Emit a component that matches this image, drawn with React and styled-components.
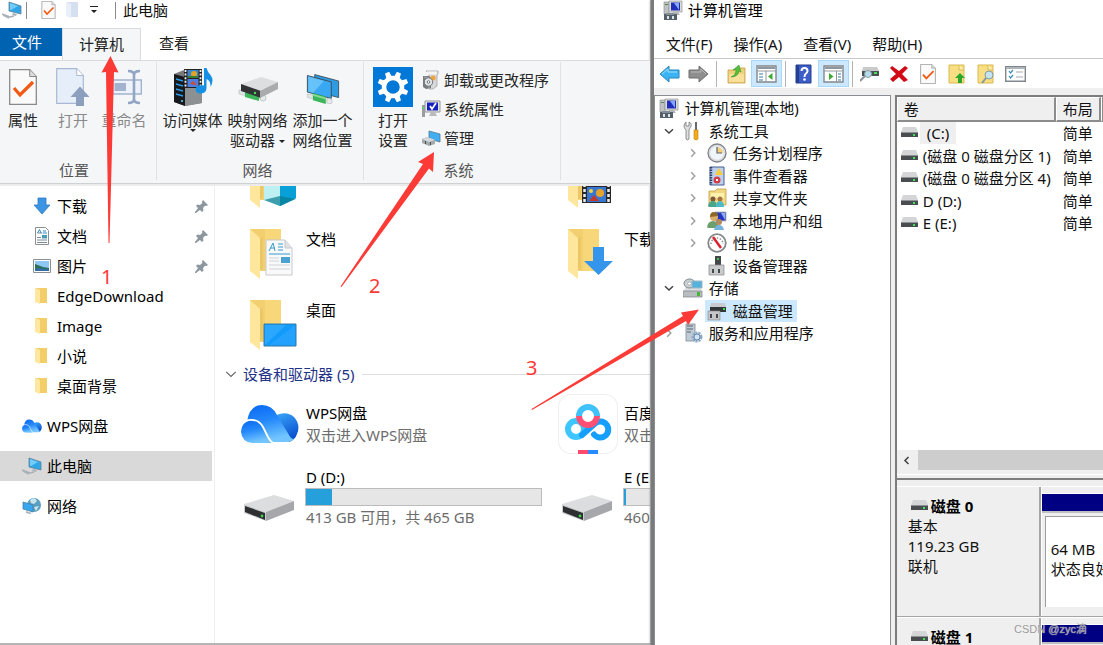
import styled, { createGlobalStyle } from 'styled-components'

const GlobalStyle = createGlobalStyle`
  * { box-sizing: border-box; }
  body {
    margin: 0;
    background: #fff;
    color: #111;
    font-family: "Noto Sans", "Noto Sans CJK SC", sans-serif;
    font-size: 15px;
    line-height: 22px;
  }
  button, table {
    font: inherit;
    color: inherit;
  }
  button {
    margin: 0;
    padding: 0;
    border: none;
    background: none;
    white-space: nowrap;
  }
  a { color: inherit; text-decoration: none; }
  ul { margin: 0; padding: 0; list-style: none; }
  p, h1, h2, h3 { margin: 0; font-size: 15px; font-weight: 400; }
  svg { display: block; flex: none; }
`

const Desktop = styled.div`
  position: relative;
  display: flex;
  height: 100vh;
  overflow: hidden;
`

/* ---------- explorer window ---------- */

const Explorer = styled.section`
  flex: 1;
  min-width: 0;
  display: flex;
  flex-direction: column;
  overflow: hidden;
  border-right: 1px solid #c4c6c8;
  border-bottom: 2px solid #b5b5b5;
`

const TitleBar = styled.header`
  display: flex;
  align-items: center;
  flex: none;
  height: 28px;
  padding: 0 2px 8px;
`

const QuickButton = styled.button`
  display: flex;
  justify-content: center;
  align-items: center;
  width: ${({ $width }) => $width || 25}px;
  height: 20px;
`

const Bar = styled.span`
  width: 1px;
  height: 17px;
  margin: 0 ${({ $gap }) => $gap || 7}px;
  background: #8b8b8b;
`

const Tabs = styled.nav`
  display: flex;
  flex: none;
  height: 32px;
`

const FileTab = styled.button`
  width: 62px;
  height: 28px;
  padding-right: 8px;
  background: #0063b1;
  color: #fff;
`

const Tab = styled.button`
  width: ${({ $active }) => ($active ? 79 : 66)}px;
  height: ${({ $active }) => ($active ? 33 : 32)}px;
  padding-bottom: 3px;
  border: 1px solid ${({ $active }) => ($active ? '#d9dbdc' : 'transparent')};
  border-bottom: none;
  background: ${({ $active }) => ($active ? '#f4f6f8' : 'transparent')};
  color: #222;
  z-index: 1;
`

const Ribbon = styled.div`
  display: flex;
  flex: none;
  height: 124px;
  background: #f4f6f8;
  border-top: 1px solid #d9dbdc;
  border-bottom: 1px solid #cfd2d5;
  box-shadow: 0 2px 0 #ececec;
  color: #262626;
  z-index: 1;
`

const Group = styled.div`
  display: flex;
  flex-direction: column;
  justify-content: space-between;
  flex: none;
  margin: 1px 0 3px;
  padding: 5px ${({ $right }) => $right}px 0 ${({ $left }) => $left}px;
  border-right: 1px solid #dfe1e3;
`

const GroupRow = styled.div`
  display: flex;
`

const GroupName = styled.p`
  line-height: 20px;
  text-align: center;
  color: #555;
`

const RibbonButton = styled.button`
  display: flex;
  flex-direction: column;
  align-items: center;
  gap: 3px;
  width: ${({ $width }) => $width}px;
  line-height: 20px;
  color: ${({ $faded }) => ($faded ? '#8a8a8a' : '#262626')};
`

const IconBox = styled.span`
  display: flex;
  justify-content: center;
  align-items: center;
  height: 40px;
`

const Caret = styled.span`
  display: inline-block;
  vertical-align: middle;
  margin-left: ${({ $inline }) => ($inline ? 4 : 0)}px;
  margin-top: ${({ $inline }) => ($inline ? 0 : -4)}px;
  border: 3px solid transparent;
  border-top-color: #222;
  border-bottom: none;
`

const ToolList = styled.div`
  display: flex;
  flex-direction: column;
  padding-left: 4px;
`

const ToolButton = styled.button`
  display: flex;
  align-items: center;
  gap: 3px;
  height: 29px;
  padding-bottom: 3px;
`

const Body = styled.div`
  display: flex;
  flex: 1;
  min-height: 0;
  overflow: hidden;
`

const NavPane = styled.nav`
  flex: none;
  width: 215px;
  padding: 7px 2px 0 0;
  border-right: 1px solid #efefef;
`

const NavLink = styled.a`
  display: flex;
  align-items: center;
  gap: 5px;
  height: 30px;
  margin-top: ${({ $top }) => ($top ? 10 : 0)}px;
  padding: 0 4px 0 ${({ $top }) => ($top ? 22 : 32)}px;
  background: ${({ $active }) => ($active ? '#d9d9d9' : 'transparent')};
  color: #000;

  .pin {
    margin-left: auto;
  }
`

const Files = styled.main`
  flex: 1;
  min-width: 0;
  padding-left: 26px;
  overflow: hidden;
  color: #000;
`

const Tiles = styled.div`
  display: grid;
  grid-template-columns: 301px 301px;
  gap: 11px 17px;
  /* the list is scrolled a little, so its first row is cut off */
  margin-top: ${({ $scrolled }) => ($scrolled ? -27 : 8)}px;
`

const Tile = styled.a`
  display: flex;
  align-items: ${({ $align }) => $align || 'center'};
  gap: 6px;
  height: ${({ $drive }) => ($drive ? 63 : 60)}px;
  white-space: nowrap;
`

const TileIcon = styled.span`
  display: flex;
  justify-content: ${({ $end }) => ($end ? 'flex-end' : 'center')};
  align-items: center;
  flex: none;
  width: 58px;
`

const TileText = styled.span`
  display: flex;
  flex-direction: column;
  flex: 1;
`

const TileLine = styled.span`
  padding-left: 1px;
  color: ${({ $muted }) => ($muted ? '#6d6d6d' : 'inherit')};
`

const Usage = styled.span`
  display: block;
  height: 18px;
  border: 1px solid #bcbcbc;
  background: #e6e6e6;
`

const UsageFill = styled.span`
  display: block;
  height: 100%;
  background: #26a0da;
`

const Section = styled.h2`
  display: flex;
  align-items: center;
  gap: 6px;
  height: 24px;
  margin: 3px 0 0 -16px;
  color: #1e3287;
  white-space: nowrap;

  &::after {
    content: "";
    flex: 1;
    height: 1px;
    margin-left: 2px;
    background: #dedede;
  }
`

/* ---------- computer management window ---------- */

const Manager = styled.section`
  display: flex;
  flex-direction: column;
  flex: none;
  width: 41%;
  border-left: 3px solid #7a7a7a;
  background: #efefef;
  box-shadow: -1px 0 2px #0000004d;
  overflow: hidden;
`

const ManagerTitle = styled.header`
  display: flex;
  align-items: center;
  gap: 5px;
  flex: none;
  height: 22px;
  padding: 0 0 2px 9px;
  background: #fff;
  color: #000;
`

const MenuBar = styled.nav`
  display: flex;
  align-items: center;
  gap: 21px;
  flex: none;
  height: 37px;
  padding: 7px 0 0 12px;
  background: #fff;
  border-bottom: 1px solid #c8c8c8;
`

const ToolBar = styled.div`
  display: flex;
  align-items: center;
  flex: none;
  height: 29px;
  padding-left: 1px;
  background: #fff;
`

const IconButton = styled.button`
  display: flex;
  justify-content: center;
  align-items: center;
  width: ${({ $on }) => ($on ? 31 : 29)}px;
  height: 27px;
  background: ${({ $on }) => ($on ? '#cce8ff' : 'transparent')};
  box-shadow: ${({ $on }) => ($on ? 'inset 0 0 0 1px #a8d8fa' : 'none')};
`

const Divider = styled.span`
  width: 1px;
  height: 26px;
  margin: 0 ${({ $wide }) => ($wide ? 5 : 3)}px 0 3px;
  background: #b4b4b4;
`

const Panes = styled.div`
  display: flex;
  gap: 4px;
  flex: 1;
  min-height: 0;
  padding-top: 7px;
`

const TreePane = styled.div`
  flex: none;
  width: 237px;
  padding: 1px 0 0 2px;
  background: #fff;
  border: 1px solid #8a8d94;
  border-bottom: none;
`

const TreeRow = styled.li`
  display: flex;
  align-items: center;
  height: 22px;
  padding-left: ${({ $depth }) => ($depth > 1 ? 24 : 0)}px;
  white-space: nowrap;

  &:nth-child(even) {
    height: 23px;
  }
`

const Twisty = styled.span`
  display: flex;
  justify-content: center;
  width: 24px;
`

const TreeItem = styled.a`
  display: flex;
  align-items: center;
  gap: 6px;
  height: 22px;
  padding: 0 4px 0 2px;
  background: ${({ $selected }) => ($selected ? '#cce8ff' : 'transparent')};
`

const DiskPane = styled.div`
  display: flex;
  flex-direction: column;
  flex: 1;
  min-width: 0;
  border-left: 2px solid #7d7d7d;
  border-top: 2px solid #7d7d7d;
  overflow: hidden;
`

const VolumeArea = styled.div`
  height: 353px;
  flex: none;
  background: #fff;
`

const Volumes = styled.table`
  width: 100%;
  table-layout: fixed;
  border-collapse: separate;
  border-spacing: 0;
  white-space: nowrap;

  th {
    height: 25px;
    padding: 0 0 0 6px;
    background: #efefef;
    border: 1px solid #fff;
    border-right: 2px solid #8c8c8c;
    border-bottom: 2px solid #8c8c8c;
    font-weight: 400;
    line-height: 20px;
    text-align: left;
  }
  td {
    height: 22px;
    padding: 0 0 0 7px;
  }
  tbody tr:nth-child(even) td {
    height: 23px;
  }
`

const VolumeName = styled.span`
  display: flex;
  align-items: center;
  gap: 2px;
  margin-left: -3px;
`

const NameText = styled.span`
  padding: 0 ${({ $selected }) => ($selected ? 7 : 3)}px;
  background: ${({ $selected }) => ($selected ? '#efefef' : 'transparent')};
`

const ScrollBar = styled.div`
  display: flex;
  flex: none;
  height: 20px;
  background: #cdcdcd;
`

const ScrollArrow = styled.button`
  display: flex;
  justify-content: center;
  align-items: center;
  width: 21px;
  padding-right: 2px;
  background: #efefef;
`

const Splitter = styled.div`
  flex: none;
  height: 6px;
  margin: 4px 0 6px;
  border-top: 1px solid #fff;
  border-bottom: 2px solid #7d7d7d;
`

const DiskRow = styled.div`
  display: flex;
  flex: none;
  height: 131px;
  border-top: 1px solid #fff;
  border-bottom: 1px solid #a5a5a5;
`

const DiskInfo = styled.div`
  flex: none;
  width: 144px;
  padding: 9px 0 0 11px;
  border-right: 2px solid #a5a5a5;
  line-height: 20px;

  h3 {
    display: flex;
    align-items: center;
    gap: 3px;
    padding-left: 3px;
    font-weight: 700;
    line-height: 20px;
    color: #000;
  }
`

const Partitions = styled.div`
  flex: 1;
  min-width: 0;
  padding-left: 2px;
  border-left: 1px solid #fff;
`

const PartitionBar = styled.div`
  height: 20px;
  margin: 6px 0 0 -2px;
  background: #000082;
  border-top: 1px solid #fff;
  border-bottom: 2px solid #c0c0c0;
`

const Partition = styled.div`
  height: 91px;
  margin: 3px 0 0 1px;
  padding: 22px 0 0 5px;
  background: #fff;
  border-left: 1px solid #9c9c9c;
  border-top: 1px solid #9c9c9c;
  line-height: 20px;
  white-space: nowrap;
`

/* ---------- notes drawn over both windows ---------- */

const Arrows = styled.svg`
  position: absolute;
  left: 0;
  top: 0;
  pointer-events: none;
  z-index: 3;
`

const Step = styled.span`
  position: absolute;
  left: ${({ $x }) => $x}px;
  top: ${({ $y }) => $y}px;
  font-size: 20px;
  line-height: 16px;
  color: #fc3a36;
  z-index: 3;
`

const Watermark = styled.span`
  position: absolute;
  right: 16px;
  bottom: 6px;
  font-family: "Liberation Sans", "Noto Sans CJK SC", sans-serif;
  font-size: 11px;
  line-height: 20px;
  color: #999;
  text-shadow: 0 0 1px #fff;
`

/* ---------- icons ---------- */

const Chevron = ({ open, color = '#8a8a8a', size = 10 }) => (
  <svg width={size} height={size} viewBox="0 0 10 10" fill="none" stroke={color} strokeWidth={size > 10 ? 1 : 1.5}>
    <path d={open ? 'M1 3.2 5 7 9 3.2' : 'M3.2 1.2 6.8 5 3.2 8.8'} />
  </svg>
)

const DocCheck = ({ width = 28, height = 36 }) => (
  <svg width={width} height={height} viewBox="0 0 28 36">
    <path d="M.7.7h20L27.3 7.5v27.8H.7z" fill="#fafafa" stroke="#8a8a8a" strokeWidth="1.3" />
    <path d="M20.7.7v6.8h6.6" fill="#ddd" stroke="#8a8a8a" />
    <path d="m5 19 6 7L24 13" fill="none" stroke="#f25a13" strokeWidth="3.2" />
  </svg>
)

const OpenDoc = () => (
  <svg width="34" height="38" viewBox="0 0 34 38">
    <path d="M.7.7h20L27.3 7.5v27.8H.7z" fill="#e6eefa" stroke="#a9b8d2" strokeWidth="1.2" />
    <path d="M20.7.7v6.8h6.6" fill="#fff" stroke="#a9b8d2" />
    <path d="M24 18.5 33.5 29H28v9h-8v-9h-5.5z" fill="#8c9fbe" />
  </svg>
)

const Rename = () => (
  <svg width="36" height="36" viewBox="-6 0 36 36">
    <path d="M.7 11h28.6v14H.7z" fill="#eef3fb" stroke="#a3b2ce" strokeWidth="1.4" />
    <path d="M2.5 14H14v8H2.500z" fill="#a3b2ce" />
    <path d="M16 2q6 0 6 4v24q0 4-6 4M28 2q-6 0-6 4m0 24q0 4 6 4" fill="none" stroke="#93a5c4" strokeWidth="2.6" />
  </svg>
)

const Media = () => (
  <svg width="40" height="40" viewBox="0 0 40 40">
    <path d="m1 7 10-4 18 3v30L12 39 1 35z" fill="#77797c" />
    <path d="m1 7 11 3v29L1 35z" fill="#17191c" />
    <path d="m12 10 17-3v29l-17 3z" fill="#8d9093" />
    <path d="m3 12 7 2m-7 3 7 2m-7 3 7 2m-7 3 7 2" stroke="#2b9bea" strokeWidth="1.6" />
    <circle cx="9" cy="34" r="1" fill="#55e0ff" />
    <path d="M11 2h18v19H11z" fill="#232323" />
    <path d="M14.5 3h11v8h-11z" fill="#3c86c8" /><path d="M14.5 12h11v8h-11z" fill="#4c7fe0" />
    <circle cx="21" cy="7" r="3" fill="#e3a224" /><path d="M15 9h10v2H15z" fill="#3c7c31" />
    <path d="m17 17 3-3 4 4z" fill="#d9472c" />
    <path d="M12.5 3v18m15-18v18" stroke="#f2f2f2" strokeWidth="1.8" strokeDasharray="2 1.6" />
    <path d="M31 1h2.500q1 4 4 7 4 5 0 12 .5-6-4-8v9q0 5-5.500 5.500-5.500 0-5.500-4 1-5 8.500-4z" fill="#1590e4" />
  </svg>
)

const NetTube = ({ x = 0, y = 0 }) => (
  <g transform={`translate(${x} ${y})`}>
    <path d="m1 3 26 6v4L1 7z" fill="#dfe5e4" stroke="#b3bbb9" strokeWidth=".6" />
    <path d="m7 2 14 4v8L7 10z" fill="#3db55b" /><path d="m7 3 14 4v2L7 5z" fill="#86dd97" />
    <circle cx="25" cy="11" r="3" fill="#e6ebea" stroke="#aab2b0" strokeWidth=".6" />
  </g>
)

const NetDrive = () => (
  <svg width="40" height="32" viewBox="0 -4 40 32">
    <NetTube x={0} y={12} />
    <path d="m3 9 20-7 17 5-17 9z" fill="#dcdee0" />
    <path d="m3 9 20 7v7L3 16z" fill="#303234" /><path d="m22 16 18-9v7l-18 9z" fill="#a9abad" />
    <circle cx="17" cy="18" r="1.2" fill="#3fe052" />
  </svg>
)

const NetPlace = () => (
  <svg width="36" height="34" viewBox="0 -3 36 37">
    <path d="m9 2 26 7v18L9 20z" fill="#2f9be0" stroke="#44525e" />
    <path d="m1 3 26 7v18L1 21z" fill="#38a8f2" stroke="#3b4a57" />
    <path d="m2 4 17 5-12 13-5-2z" fill="#67c1fa" />
    <NetTube x={0} y={20} />
  </svg>
)

const Gear = () => (
  <svg width="40" height="40" viewBox="0 0 40 40">
    <path d="M0 0h40v40H0z" fill="#0078d7" />
    <g fill="#fff">
      {[0, 45, 90, 135, 180, 225, 270, 315].map((a) => (
        <path key={a} d="M17 11 17.800 4.500h4.400L23 11z" transform={`rotate(${a + 22.5} 20 20)`} />
      ))}
    </g>
    <circle cx="20" cy="20" r="9" fill="none" stroke="#fff" strokeWidth="4.5" />
  </svg>
)

const Uninstall = () => (
  <svg width="19" height="20" viewBox="0 0 19 20">
    <path d="M4 1h12v3h-1v12l-4 3H7V4z" fill="#d6d8da" stroke="#a4a4a4" strokeWidth=".8" />
    <path d="M5 1.500h10v3H5z" fill="#f4f4f4" /><circle cx="11" cy="8" r="2.500" fill="#f0a53b" />
    <path d="M1 6h6l2 2v10l-5 1-3-2z" fill="#777c80" /><path d="m2 7 5 1v10" fill="none" stroke="#a9adb0" />
    <circle cx="6.500" cy="12" r="4.200" fill="#dfe5e8" stroke="#777" />
    <circle cx="6.500" cy="12" r="1.300" fill="#fff" stroke="#777" />
  </svg>
)

const SystemIcon = () => (
  <svg width="19" height="18" viewBox="0 0 19 18">
    <path d="M0 5h3v12H0z" fill="#9a9d9f" /><path d="M1 7h1v2H1z" fill="#3bea4c" />
    <path d="M3 1h15v11H3z" fill="#e7e7e4" stroke="#97979b" /><path d="M5 2.500h11v8H5z" fill="#1420c0" />
    <path d="m8 6 2 3 4-6" fill="none" stroke="#fff" strokeWidth="1.800" />
    <path d="M9 12h4l2 4H7z" fill="#b8babb" />
  </svg>
)

const ManageIcon = () => (
  <svg width="19" height="17" viewBox="0 0 19 17">
    <path d="m7 1 11 3v8L7 9z" fill="#42aef0" stroke="#527a95" strokeWidth=".8" />
    <path d="m0 9 5-2 8 3v4l-6 2-7-3z" fill="#a4a9ad" /><path d="m0 9 5-2 8 3-6 2z" fill="#d5d9dc" />
    <path d="M3 11h1v3H3zm5 1h1v3H8z" fill="#4b4f53" />
  </svg>
)

const Computer = () => (
  <svg width="20" height="18" viewBox="0 0 20 18">
    <path d="m7 1 12 4v8L7 10z" fill="#32a5e7" stroke="#5e8199" strokeWidth=".8" />
    <path d="m8 2 8 3-7 4H8z" fill="#73cdfb" /><path d="m11 12 4 1-1 2-4-1z" fill="#a9b3ba" />
    <path d="m0 13 8 3 4-1M1 14l6 3" fill="none" stroke="#aab1b6" strokeWidth="1.400" />
  </svg>
)

const SmallFolder = ({ faded }) => (
  <svg width="20" height="18" viewBox="0 0 20 18">
    <path d="M4 1h11v15H6z" fill={faded ? '#d4e0f0' : '#f3ce68'} />
    <path d="m3 1 5 2v14l-5-2z" fill={faded ? '#e8eff8' : '#ffe7a0'} />
  </svg>
)

const DownArrow = () => (
  <svg width="20" height="18" viewBox="0 0 20 18">
    <path d="M6 1h8v7h4l-8 9-8-9h4z" fill="#3b95e3" stroke="#2c7ac2" strokeWidth=".8" />
  </svg>
)

const DocSmall = () => (
  <svg width="20" height="18" viewBox="0 0 20 18">
    <path d="M3.500.5h10l3 3v14h-13z" fill="#fff" stroke="#8a8f94" />
    <path d="M5.500 6h5M5 13h10M5 15.500h10M5 10.500h4" stroke="#7e8b96" />
    <path d="m5.500 6 2-3.500 1.500 3.500M11 4h3M11 6h4" fill="none" stroke="#2d8cc8" /><path d="M10 8h5v3.500h-5z" fill="#4b9bb8" />
  </svg>
)

const Photo = () => (
  <svg width="20" height="18" viewBox="0 0 20 18">
    <path d="M1.500 2.500h17v13h-17z" fill="#fff" stroke="#8a8f94" />
    <path d="M3 4h14v10H3z" fill="#8fc8f4" /><path d="m3 7 8 3 6 1v3H3z" fill="#2f7155" /><path d="m3 11 14 1v2H3z" fill="#336da3" />
  </svg>
)

const Pin = () => (
  <svg className="pin" width="13" height="13" viewBox="0 0 13 13" fill="#8c979f">
    <path d="m8 0 5 5-1.500 1-1.500-.3L8 8l.5 2.500L7 12 1 6l1.500-1.500L5 5l2.300-2L7 1.500z" />
    <path d="M3.500 7.500 5.500 9.500 1 13H0v-1z" />
  </svg>
)

const WpsCloud = ({ width = 58, height = 40, id }) => (
  <svg width={width} height={height} viewBox="0 0 58 40">
    <defs>
      <linearGradient id={`${id}a`} x1="0" y1="0" x2="0.300" y2="1">
        <stop offset="0" stopColor="#0866f2" /><stop offset=".5" stopColor="#2489fb" /><stop offset="1" stopColor="#72c5ff" />
      </linearGradient>
      <linearGradient id={`${id}b`} x1="0" y1="0" x2="0.400" y2="1">
        <stop offset="0" stopColor="#3ba9fb" /><stop offset="1" stopColor="#0a50cf" />
      </linearGradient>
    </defs>
    <path d="M33 12q12-6 20 1 7 8 3 17-2 6-8 8z" fill={`url(#${id}b)`} />
    <path d="M6 18Q8 1 21 1q10 0 15 10l12 20q2 4 5 4-3 3-8 3H12z" fill={`url(#${id}a)`} />
    <path d="M0 28q1-12 12-12 7 0 11 8l8 15H11Q1 38 0 28z" fill={`url(#${id}a)`} />
    <path d="M1 20q5-5 11-4 6 0 10 7l5 10q2 4 5 6" fill="none" stroke="#fff" strokeWidth="1.800" />
  </svg>
)

const Globe = () => (
  <svg width="20" height="18" viewBox="0 0 20 18">
    <circle cx="12" cy="8" r="7" fill="#5b9fc0" /><path d="M8 3q5-4 7 1l-3 3-3-1zm4 7 5-1-3 5z" fill="#c8e5ee" />
    <path d="m1 5 10 3v7L1 12z" fill="#36a6ee" stroke="#4f7f9f" strokeWidth=".8" /><path d="m4 14 6 2-2 1-4-1z" fill="#a9b5bb" />
  </svg>
)

const extras = {
  cube: <g><path d="m15 22 16-9 16 6v22l-16 8-16-7z" fill="#19b9d3" /><path d="m15 20 16 5v24l-16-6z" fill="#bdf0f2" /><path d="m31 25 16-6v22l-16 8z" fill="#09a0d8" /><path d="m31 39 16 3-16 7-16-6z" fill="#087b91" opacity=".7" /></g>,
  film: <g><path d="M15 12h29v34H15z" fill="#2a2a2a" /><path d="M20 13h19v15H20z" fill="#377945" /><path d="M20 30h19v15H20z" fill="#3776d1" /><circle cx="26" cy="23" r="4" fill="#bf3e69" /><circle cx="33" cy="36" r="4" fill="#e7a42a" /><circle cx="24" cy="34" r="2" fill="#f6d53c" /><path d="m22 44 5-6 5 6z" fill="#c4382c" /><path d="M17.500 12v34m24-34v34" stroke="#eee" strokeWidth="2.500" strokeDasharray="3 2" /></g>,
  doc: <g><path d="M17 12h19l7 8v27H17z" fill="#f9f9fa" stroke="#c7c9cc" /><path d="M36 12v8h7" fill="#dfe2e5" stroke="#c7c9cc" /><path d="m20 23 4-8 2 8m-5-3h5m3-4h5m-5 3h5m-5 3h5M20 26h21" fill="none" stroke="#379acd" /><path d="M32 29h9v6h-9z" fill="#4ba1d1" /><path d="M20 30h10m-10 3h10m-10 4h21m-21 4h21" stroke="#d0d3d6" /></g>,
  down: <path d="M26 19h11v14h9L31.500 47 17 33h9z" fill="#3495ea" />,
  desk: <g><path d="M15 25h32v22H15z" fill="#119bfa" stroke="#347aa8" /><path d="M16 26h21L16 46z" fill="#36adff" opacity=".7" /><path d="m20 46 26-20v20z" fill="#35a8ff" opacity=".5" /></g>,
}

const Folder = ({ extra }) => (
  <svg width="50" height="52" viewBox="0 0 50 52">
    <path d="M1 1h31v42H12L1 35z" fill="#f2d06f" /><path d="M16 1h16v42H16z" fill="#ffe08a" opacity=".45" />
    <path d="m1 1 10 9v41L1 43z" fill="#ffe69d" /><path d="m11 10 3-1v31l-3 3z" fill="#e5bd5b" opacity=".5" />
    {extras[extra]}
  </svg>
)

const Drive = () => (
  <svg width="53" height="34" viewBox="1 0 53 34">
    <path d="M1 10 31 1l20 6-28 11z" fill="#dcdddf" />
    <path d="m1 10 22 8v9L1 19z" fill="#cbcccf" /><path d="m2 12 20 7v7L2 18z" fill="#2d2f31" />
    <path d="M23 18 51 7v9L23 27z" fill="#a5a7aa" /><circle cx="19" cy="22" r="1.400" fill="#35d54b" />
  </svg>
)

const Baidu = () => (
  <svg width="60" height="60" viewBox="0 0 60 60">
    <rect x=".5" y=".5" width="59" height="59" rx="12" fill="#fff" stroke="#eee" />
    <g fill="none" strokeWidth="6">
      <circle cx="18" cy="35" r="8" stroke="#3dc6ff" />
      <path d="M24 41 37 29.500a8 8 0 1 1-1 11" stroke="#149fff" strokeLinecap="round" />
      <path d="M21 22a9 9 0 0 1 18 0" stroke="#3fc2fb" />
      <path d="M21 22a9 9 0 0 0 18 0" stroke="#ff4f75" />
    </g>
    <path d="M20 56h10v4H20z" fill="#ff4a6d" /><path d="M30 56h10v4H30z" fill="#258bff" />
  </svg>
)

const MgmtIcon = () => (
  <svg width="20" height="20" viewBox="0 0 20 20">
    <path d="M1 2h5v12H1z" fill="#c0c3c5" stroke="#85888a" strokeWidth=".6" /><path d="M2 4h3v1H2z" fill="#4b8c4c" />
    <path d="M6 1h13v11H6z" fill="#dcdcd3" stroke="#919496" strokeWidth=".7" /><path d="M8 2.500h9v8H8z" fill="#202cba" />
    <path d="m11 3 5-.5V10z" fill="#87a7ff" /><path d="M10 12h5l2 3h-7z" fill="#b4b7b8" />
    <path d="M1 14h13v6H1z" fill="#53606a" /><path d="M3 13h8v2H3z" fill="#818e96" /><path d="M4 16h2v3H4zm5 0h2v3H9z" fill="#dee3e6" />
  </svg>
)

const Arrow = ({ back }) => (
  <svg width="21" height="18" viewBox="0 0 21 18">
    <path
      d={back ? 'M10 1v4h10v8H10v4L1 9z' : 'M11 1v4H1v8h10v4l9-8z'}
      fill={back ? '#3bb4f3' : '#8e8e8e'} stroke={back ? '#2d82b7' : '#6e6e6e'}
    />
    <path d={back ? 'm3 9 6-5v3h9' : 'M3 7h10V4l5 5'} fill="none" stroke={back ? '#9be0ff' : '#b8b8b8'} />
  </svg>
)

const FolderUp = () => (
  <svg width="19" height="20" viewBox="0 0 19 20">
    <path d="M1 6h6l2-2h9v15H1z" fill="#eed17b" stroke="#c59d43" strokeWidth=".8" /><path d="M2 10h15v8H2z" fill="#f8e09a" />
    <path d="M4 13q5-2 5-7L6 6l6-5 2 7-2-1q-1 6-8 6z" fill="#55bf3d" stroke="#318d27" strokeWidth=".5" />
  </svg>
)

/* tree: the list column is on the left, otherwise on the right */
const Layout = ({ tree }) => (
  <svg width="21" height="18" viewBox="0 0 21 18">
    <path d="M1 1h19v16H1z" fill="#fff" stroke="#83888d" strokeWidth="1.400" /><path d="M2 2h17v2H2z" fill="#8e969e" />
    <path d={tree ? 'M1 6h19M10 6v11' : 'M1 6h19M13.500 6v11'} stroke="#92979b" />
    {tree
      ? <g><path d="M3 9h4m-4 3h4m-4 3h4" stroke="#3978a4" strokeWidth="1.200" /><path d="M16.500 8v7L12 11.500z" fill="#3caa35" /></g>
      : <g><path d="M15 9h3m-3 3h3m-3 3h3" stroke="#3978a4" strokeWidth="1.200" /><path d="M6 8v7l4.500-3.500z" fill="#3caa35" /></g>}
  </svg>
)

const Help = () => (
  <svg width="17" height="20" viewBox="0 0 17 20">
    <path d="M1 1h15v18H1z" fill="#3c5dc8" stroke="#263f91" /><path d="M1 1h3v18H1z" fill="#24418f" />
    <path d="M6.500 7q0-3 3-3t3 3q0 1.500-1.500 2.500T9.500 13" fill="none" stroke="#fff" strokeWidth="2" /><circle cx="9.500" cy="15.500" r="1.300" fill="#fff" />
  </svg>
)

const MiniDrive = () => (
  <svg width="17" height="12" viewBox="0 0 17 12">
    <path d="M2 0h13l2 5H0z" fill="#d4d5d7" /><path d="M0 5h17v5H0z" fill="#4a4d50" /><path d="M0 5h17v1H0z" fill="#8f9294" /><path d="M12 7h2v2h-2z" fill="#39e95b" />
  </svg>
)

const DriveSearch = () => (
  <svg width="20" height="17" viewBox="0 0 20 17">
    <path d="M3 2h14l2 4H2z" fill="#c8cacc" /><path d="M2 6h17v5H2z" fill="#4b5053" /><path d="M14 7h3v2h-3z" fill="#45df5b" />
    <circle cx="8" cy="9" r="3.500" fill="#b6ddeb" stroke="#899da7" /><path d="m5 11-5 5" stroke="#8a9399" strokeWidth="2" />
  </svg>
)

const Cross = () => (
  <svg width="20" height="18" viewBox="0 0 20 18">
    <path d="m3 1 7 5 6-5 3 2-6 6 6 6-4 2-5-5-6 5-3-3 6-5-6-6z" fill="#d10b16" />
  </svg>
)

const Note = ({ search }) => (
  <svg width="18" height="20" viewBox="0 0 18 20">
    <path d="M1 1h15v18H1z" fill="#f9df83" stroke="#d9b84f" /><path d="M11 1v5h5" fill="#fff0b8" stroke="#d9b84f" />
    {search
      ? <g><circle cx="12" cy="11" r="4" fill="#c3e4f0" stroke="#879ba5" /><path d="m9 14-4 5" stroke="#8496a2" strokeWidth="2" /></g>
      : <path d="m12 9 5 5h-3v5h-4v-5H7z" fill="#29a82d" />}
  </svg>
)

const Checklist = () => (
  <svg width="21" height="16" viewBox="0 0 21 16">
    <path d="M.7.7h19.600v14.600H.7z" fill="#fff" stroke="#80878c" strokeWidth="1.400" /><path d="M1 1h19v2H1z" fill="#aeb6bb" />
    <path d="m4 5 1.500 2L8 4M4 10l1.500 2L8 9" fill="none" stroke="#3a8abd" strokeWidth="1.200" /><path d="M11 6h7m-7 5h7" stroke="#a5a7a9" strokeWidth="1.200" />
  </svg>
)

const treeArt = {
  tools: <g><path d="M3 1v4h3V1q4 2 1 6l-1 2v9q-2 2-3 0V9Q-1 5 3 1z" fill="#dde0e2" stroke="#777" strokeWidth=".8" /><path d="M12 1h2v9h-2z" fill="#656b70" /><path d="M11 9h4v9q-2 2-4 0z" fill="#f3ab20" stroke="#c77f0b" strokeWidth=".6" /></g>,
  clock: <g><circle cx="10" cy="10" r="9" fill="#d8dadd" stroke="#818387" strokeWidth="1.300" /><circle cx="10" cy="10" r="6.800" fill="#eff5f9" /><path d="M10 10V4a6 6 0 0 1 6 6z" fill="#f5cf76" /><path d="M10 4v6h5" fill="none" stroke="#586777" strokeWidth="1.200" /></g>,
  events: <g><path d="M3 1h14v18H3z" fill="#bfd0eb" stroke="#455f93" /><path d="M4 1v18" stroke="#30466e" strokeWidth="2.500" strokeDasharray="1.500 1" /><path d="m12 2 4 7H8z" fill="#f8cc37" /><circle cx="10" cy="14" r="3.500" fill="#d23c48" /><path d="m9 13 2 2m0-2-2 2" stroke="#fff" /></g>,
  share: <g><path d="M2 3h6l2-2h9v16H2z" fill="#f1d781" stroke="#c49f45" strokeWidth=".8" /><path d="M4 5h13v5H4z" fill="#fff1ae" /><circle cx="6" cy="11" r="2.500" fill="#7e583c" /><circle cx="13" cy="11" r="2.500" fill="#a87244" /><path d="M1 18q1-5 5-5t4 6H2z" fill="#47a68b" /><path d="M9 19q0-6 4-6t4 6z" fill="#4dbac7" /></g>,
  users: <g><path d="M8 1h11v9H8z" fill="#2536bc" stroke="#b6b8bb" /><path d="m14 2 4 7V2z" fill="#8caefa" /><circle cx="7" cy="6" r="4" fill="#dcae6c" /><path d="M3 6q0-5 4-5t4 4z" fill="#8c6927" /><path d="M0 16q1-6 6-6t6 7H1z" fill="#6d9f6e" /><circle cx="12" cy="11" r="3" fill="#b68a61" /><path d="M7 19q1-5 5-5t5 5z" fill="#76b2df" /></g>,
  gauge: <g><circle cx="10" cy="10" r="8.800" fill="#fff" stroke="#85878a" strokeWidth="1.800" /><path d="M4 11a6 6 0 0 1 12 0" fill="none" stroke="#8b9095" strokeDasharray="1.500 1.500" strokeWidth="1.500" /><path d="m6 4 8 11" stroke="#db2330" strokeWidth="2.500" /></g>,
  device: <g><path d="M8 0h6v10H8z" fill="#44484b" /><path d="M10 2h2v2h-2z" fill="#37c54d" /><path d="M2 9h15v10H2z" fill="#c8cacc" stroke="#888" strokeWidth=".7" /><path d="M5 13h2v4H5zm6 0h2v4h-2z" fill="#43484b" /></g>,
  storage: <g><path d="m3 9 14 0 2 5H0z" fill="#dadde0" /><path d="M0 13h19v6H0z" fill="#b8bdc0" stroke="#7b8084" strokeWidth=".7" /><path d="M14 14h3v4h-3z" fill="#49b638" /><ellipse cx="6.500" cy="5.500" rx="5.500" ry="4.500" fill="#c7d0d5" stroke="#7f888d" /><ellipse cx="6.500" cy="5.500" rx="2" ry="1.500" fill="#fff" stroke="#90999e" strokeWidth=".6" /><path d="M9 3h10v7H9z" fill="#54b3de" stroke="#a1b5c0" /></g>,
  disk: <g><path d="M4 2h14l1 4H3z" fill="#c9cbce" /><path d="M3 6h16v5H3z" fill="#34373a" /><path d="M16 7h2v2h-2z" fill="#3ade55" /><path d="M1 10h12v9H1z" fill="#c5c7c9" stroke="#888" strokeWidth=".6" /><path d="M3 13h2v4H3zm6 0h2v4H9z" fill="#43484b" /></g>,
  services: <g><path d="M3 1h9v17H3z" fill="#c0cbd4" stroke="#7f8c97" strokeWidth=".8" /><path d="M4 3h6m-6 3h6m-6 3h4" stroke="#57656e" /><circle cx="14" cy="14" r="4" fill="none" stroke="#8cabcc" strokeWidth="3" strokeDasharray="2 .8" /><circle cx="14" cy="14" r="3" fill="#d6e4f2" stroke="#6587ac" /></g>,
}

const TreeIcon = ({ name }) => (
  <svg width="20" height="20" viewBox="0 0 20 20">{treeArt[name]}</svg>
)

/* ---------- data ---------- */

const navLinks = [
  { name: '下载', icon: <DownArrow />, pinned: true },
  { name: '文档', icon: <DocSmall />, pinned: true },
  { name: '图片', icon: <Photo />, pinned: true },
  { name: 'EdgeDownload', icon: <SmallFolder /> },
  { name: 'Image', icon: <SmallFolder /> },
  { name: '小说', icon: <SmallFolder /> },
  { name: '桌面背景', icon: <SmallFolder /> },
  { name: 'WPS网盘', icon: <WpsCloud width={20} height={14} id="nav" />, top: true },
  { name: '此电脑', icon: <Computer />, top: true, active: true },
  { name: '网络', icon: <Globe />, top: true },
]

const folders = [
  { extra: 'cube' },
  { extra: 'film' },
  { extra: 'doc', name: '文档' },
  { extra: 'down', name: '下载' },
  { extra: 'desk', name: '桌面' },
]

const drives = [
  { name: 'D (D:)', used: 11, note: '413 GB 可用，共 465 GB' },
  { name: 'E (E:)', used: 1, note: '460 GB 可用，共 465 GB' },
]

const tree = [
  { name: '系统工具', icon: 'tools', depth: 1, open: true },
  { name: '任务计划程序', icon: 'clock', depth: 2 },
  { name: '事件查看器', icon: 'events', depth: 2 },
  { name: '共享文件夹', icon: 'share', depth: 2 },
  { name: '本地用户和组', icon: 'users', depth: 2 },
  { name: '性能', icon: 'gauge', depth: 2 },
  { name: '设备管理器', icon: 'device', depth: 2, leaf: true },
  { name: '存储', icon: 'storage', depth: 1, open: true },
  { name: '磁盘管理', icon: 'disk', depth: 2, leaf: true, selected: true },
  { name: '服务和应用程序', icon: 'services', depth: 1 },
]

const volumes = ['(C:)', '(磁盘 0 磁盘分区 1)', '(磁盘 0 磁盘分区 4)', 'D (D:)', 'E (E:)']

function ExplorerRibbon() {
  return (
    <Ribbon>
      <Group $left={0} $right={8}>
        <GroupRow>
          <RibbonButton $width={46}><IconBox><DocCheck /></IconBox>属性</RibbonButton>
          <RibbonButton $width={54} $faded><IconBox><OpenDoc /></IconBox>打开</RibbonButton>
          <RibbonButton $width={48} $faded><IconBox><Rename /></IconBox>重命名</RibbonButton>
        </GroupRow>
        <GroupName>位置</GroupName>
      </Group>
      <Group $left={3} $right={8}>
        <GroupRow>
          <RibbonButton $width={65}><IconBox><Media /></IconBox>访问媒体<Caret /></RibbonButton>
          <RibbonButton $width={65}>
            <IconBox><NetDrive /></IconBox>
            <span>映射网络<br />驱动器<Caret $inline /></span>
          </RibbonButton>
          <RibbonButton $width={65}>
            <IconBox><NetPlace /></IconBox>
            <span>添加一个<br />网络位置</span>
          </RibbonButton>
        </GroupRow>
        <GroupName>网络</GroupName>
      </Group>
      <Group $left={4} $right={11}>
        <GroupRow>
          <RibbonButton $width={50}>
            <IconBox><Gear /></IconBox>
            <span>打开<br />设置</span>
          </RibbonButton>
          <ToolList>
            <ToolButton><Uninstall />卸载或更改程序</ToolButton>
            <ToolButton><SystemIcon />系统属性</ToolButton>
            <ToolButton><ManageIcon />管理</ToolButton>
          </ToolList>
        </GroupRow>
        <GroupName>系统</GroupName>
      </Group>
    </Ribbon>
  )
}

function ExplorerWindow() {
  return (
    <Explorer>
      <TitleBar>
        <Computer />
        <Bar $gap={4} />
        <QuickButton $width={35} aria-label="属性"><DocCheck width={15} height={18} /></QuickButton>
        <QuickButton $width={14} aria-label="新建文件夹"><SmallFolder faded /></QuickButton>
        <QuickButton $width={28} aria-label="自定义">
          <svg width="8" height="8" viewBox="0 0 8 8"><path d="M0 0h8v1H0zM1 4h6L4 7z" fill="#222" /></svg>
        </QuickButton>
        <Bar />
        <h1>此电脑</h1>
      </TitleBar>
      <Tabs>
        <FileTab>文件</FileTab>
        <Tab $active>计算机</Tab>
        <Tab>查看</Tab>
      </Tabs>
      <ExplorerRibbon />
      <Body>
        <NavPane>
          {navLinks.map((link) => (
            <NavLink key={link.name} href="#" $top={link.top} $active={link.active}>
              {link.icon}
              {link.name}
              {link.pinned && <Pin />}
            </NavLink>
          ))}
        </NavPane>
        <Files>
          <Tiles $scrolled>
            {folders.map((folder) => (
              <Tile key={folder.extra} href="#" $align="flex-start">
                <TileIcon $end><Folder extra={folder.extra} /></TileIcon>
                <TileText><TileLine>{folder.name}</TileLine></TileText>
              </Tile>
            ))}
          </Tiles>
          <Section><Chevron open color="#666" size={12} />设备和驱动器 (5)</Section>
          <Tiles>
            <Tile href="#">
              <TileIcon><WpsCloud id="tile" /></TileIcon>
              <TileText><TileLine>WPS网盘</TileLine><TileLine $muted>双击进入WPS网盘</TileLine></TileText>
            </Tile>
            <Tile href="#">
              <TileIcon><Baidu /></TileIcon>
              <TileText><TileLine>百度网盘</TileLine><TileLine $muted>双击运行百度网盘</TileLine></TileText>
            </Tile>
            {drives.map((drive) => (
              <Tile key={drive.name} href="#" $drive $align="flex-end">
                <TileIcon><Drive /></TileIcon>
                <TileText>
                  <TileLine>{drive.name}</TileLine>
                  <Usage><UsageFill style={{ width: `${drive.used}%` }} /></Usage>
                  <TileLine $muted>{drive.note}</TileLine>
                </TileText>
              </Tile>
            ))}
          </Tiles>
        </Files>
      </Body>
    </Explorer>
  )
}

function ManagerWindow() {
  return (
    <Manager>
      <ManagerTitle><MgmtIcon /><h1>计算机管理</h1></ManagerTitle>
      <MenuBar>
        <button>文件(F)</button>
        <button>操作(A)</button>
        <button>查看(V)</button>
        <button>帮助(H)</button>
      </MenuBar>
      <ToolBar>
        <IconButton aria-label="后退"><Arrow back /></IconButton>
        <IconButton aria-label="前进"><Arrow /></IconButton>
        <Divider $wide />
        <IconButton aria-label="上一级"><FolderUp /></IconButton>
        <IconButton $on aria-label="控制台树"><Layout tree /></IconButton>
        <Divider />
        <IconButton aria-label="帮助"><Help /></IconButton>
        <IconButton $on aria-label="操作窗格"><Layout /></IconButton>
        <Divider />
        <IconButton aria-label="扫描"><DriveSearch /></IconButton>
        <IconButton aria-label="删除"><Cross /></IconButton>
        <IconButton aria-label="属性"><DocCheck width={16} height={20} /></IconButton>
        <IconButton aria-label="打开"><Note /></IconButton>
        <IconButton aria-label="查找"><Note search /></IconButton>
        <IconButton aria-label="列表"><Checklist /></IconButton>
      </ToolBar>
      <Panes>
        <TreePane>
          <ul>
            <TreeRow $depth={0}><TreeItem href="#"><MgmtIcon />计算机管理(本地)</TreeItem></TreeRow>
            {tree.map((node) => (
              <TreeRow key={node.name} $depth={node.depth}>
                <Twisty>{!node.leaf && <Chevron open={node.open} color={node.open ? '#444' : '#a0a0a0'} />}</Twisty>
                <TreeItem href="#" $selected={node.selected}><TreeIcon name={node.icon} />{node.name}</TreeItem>
              </TreeRow>
            ))}
          </ul>
        </TreePane>
        <DiskPane>
          <VolumeArea>
            <Volumes>
              <colgroup><col width="159" /><col width="45" /><col /></colgroup>
              <thead>
                <tr><th>卷</th><th>布局</th><th aria-label="类型" /></tr>
              </thead>
              <tbody>
                {volumes.map((name, i) => (
                  <tr key={name}>
                    <td><VolumeName><MiniDrive /><NameText $selected={i === 0}>{name}</NameText></VolumeName></td>
                    <td>简单</td>
                    <td />
                  </tr>
                ))}
              </tbody>
            </Volumes>
          </VolumeArea>
          <ScrollBar>
            <ScrollArrow aria-label="向左滚动">
              <svg width="7" height="9" viewBox="0 0 7 9"><path d="M5.500 1 2 4.500 5.500 8" fill="none" stroke="#444" strokeWidth="1.600" /></svg>
            </ScrollArrow>
          </ScrollBar>
          <Splitter />
          <DiskRow>
            <DiskInfo>
              <h3><MiniDrive />磁盘 0</h3>
              <p>基本</p>
              <p>119.23 GB</p>
              <p>联机</p>
            </DiskInfo>
            <Partitions>
              <PartitionBar />
              <Partition>
                <p>64 MB</p>
                <p>状态良好</p>
              </Partition>
            </Partitions>
          </DiskRow>
          <DiskRow>
            <DiskInfo><h3><MiniDrive />磁盘 1</h3></DiskInfo>
            <Partitions><PartitionBar /></Partitions>
          </DiskRow>
        </DiskPane>
      </Panes>
    </Manager>
  )
}

function App() {
  return (
    <>
      <GlobalStyle />
      <Desktop>
        <ExplorerWindow />
        <ManagerWindow />
        <Arrows width="720" height="430" fill="#fc3a36">
          <path d="m110.500 56 8 16.500-4.500-.5-4.500 171h-1L106 72l-4.500.5z" />
          <path d="m434 152-1 20-4-3.500L341.500 287l-1-.5L423 164l-5-2z" />
          <path d="m699 309.500-11 15.500-2-4L532 410l-.5-1L683 316l-2-3.500z" />
        </Arrows>
        <Step $x={101} $y={269}>1</Step>
        <Step $x={369} $y={278}>2</Step>
        <Step $x={526} $y={360}>3</Step>
        <Watermark>CSDN @zyc滴</Watermark>
      </Desktop>
    </>
  )
}

export default App
